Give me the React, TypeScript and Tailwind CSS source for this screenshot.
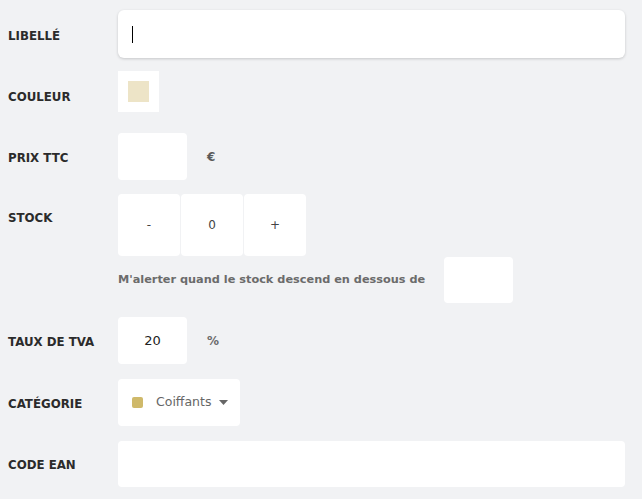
const font = { fontFamily: '"DejaVu Sans", "Noto Sans", sans-serif' }

function Label({ children, pt = "pt-[17px]" }: { children: React.ReactNode; pt?: string }) {
  return (
    <div className={`w-[118px] shrink-0 pl-2 ${pt} text-[11.8px] leading-4 font-bold uppercase text-[#2b2b2b]`}>
      {children}
    </div>
  )
}

export default function App() {
  return (
    <div className="min-h-[499px] w-[642px] bg-[#f1f2f4] pt-[10px]" style={font}>
      {/* Libellé */}
      <div className="mb-[13px] flex">
        <Label pt="pt-[18px]">Libellé</Label>
        <div className="flex h-[48px] w-[507px] items-center rounded-md bg-white pl-[14px] shadow-[0_1px_3px_rgba(0,0,0,0.18)]">
          <div className="h-[17px] w-px bg-black" />
        </div>
      </div>

      {/* Couleur */}
      <div className="mb-[21px] flex">
        <Label pt="pt-[18px]">Couleur</Label>
        <div className="flex h-[41px] w-[41px] items-center justify-center bg-white">
          <div className="h-[21px] w-[21px] bg-[#ede4c7]" />
        </div>
      </div>

      {/* Prix TTC */}
      <div className="mb-[14px] flex">
        <Label>Prix TTC</Label>
        <div className="h-[47px] w-[69px] rounded bg-white" />
        <div className="ml-[20px] pt-[16px] text-[12px] leading-4 font-bold text-[#5a5a5a]">€</div>
      </div>

      {/* Stock */}
      <div className="mb-[14px] flex">
        <Label pt="pt-[16px]">Stock</Label>
        <div className="flex flex-col">
          <div className="flex gap-px">
            {["-", "0", "+"].map((s) => (
              <div
                key={s}
                className="flex h-[62px] w-[62px] items-center justify-center rounded bg-white text-[12px] text-[#444]"
              >
                {s}
              </div>
            ))}
          </div>
          <div className="mt-px flex items-center">
            <span className="w-[326px] text-[11.3px] font-bold text-[#6b6b6b]">
              M'alerter quand le stock descend en dessous de
            </span>
            <div className="h-[46px] w-[69px] rounded bg-white" />
          </div>
        </div>
      </div>

      {/* Taux de TVA */}
      <div className="mb-[15px] flex">
        <Label>Taux de TVA</Label>
        <div className="flex h-[47px] w-[69px] items-center justify-center rounded bg-white text-[13px] text-[#222]">
          20
        </div>
        <div className="ml-[20px] pt-[16px] text-[12px] leading-4 font-bold text-[#6b6b6b]">%</div>
      </div>

      {/* Catégorie */}
      <div className="mb-[15px] flex">
        <Label>Catégorie</Label>
        <div className="flex h-[47px] w-[122px] items-center rounded bg-white pl-[14px]">
          <div className="h-[11px] w-[11px] rounded-[2px] bg-[#cfb96a]" />
          <span className="ml-[13px] text-[12.5px] text-[#666]">Coiffants</span>
          <svg className="ml-[8px]" width="9" height="5" viewBox="0 0 9 5">
            <path d="M0 0h9L4.5 5z" fill="#666" />
          </svg>
        </div>
      </div>

      {/* Code EAN */}
      <div className="flex">
        <Label pt="pt-[16px]">Code EAN</Label>
        <div className="h-[46px] w-[507px] rounded bg-white" />
      </div>
    </div>
  )
}
